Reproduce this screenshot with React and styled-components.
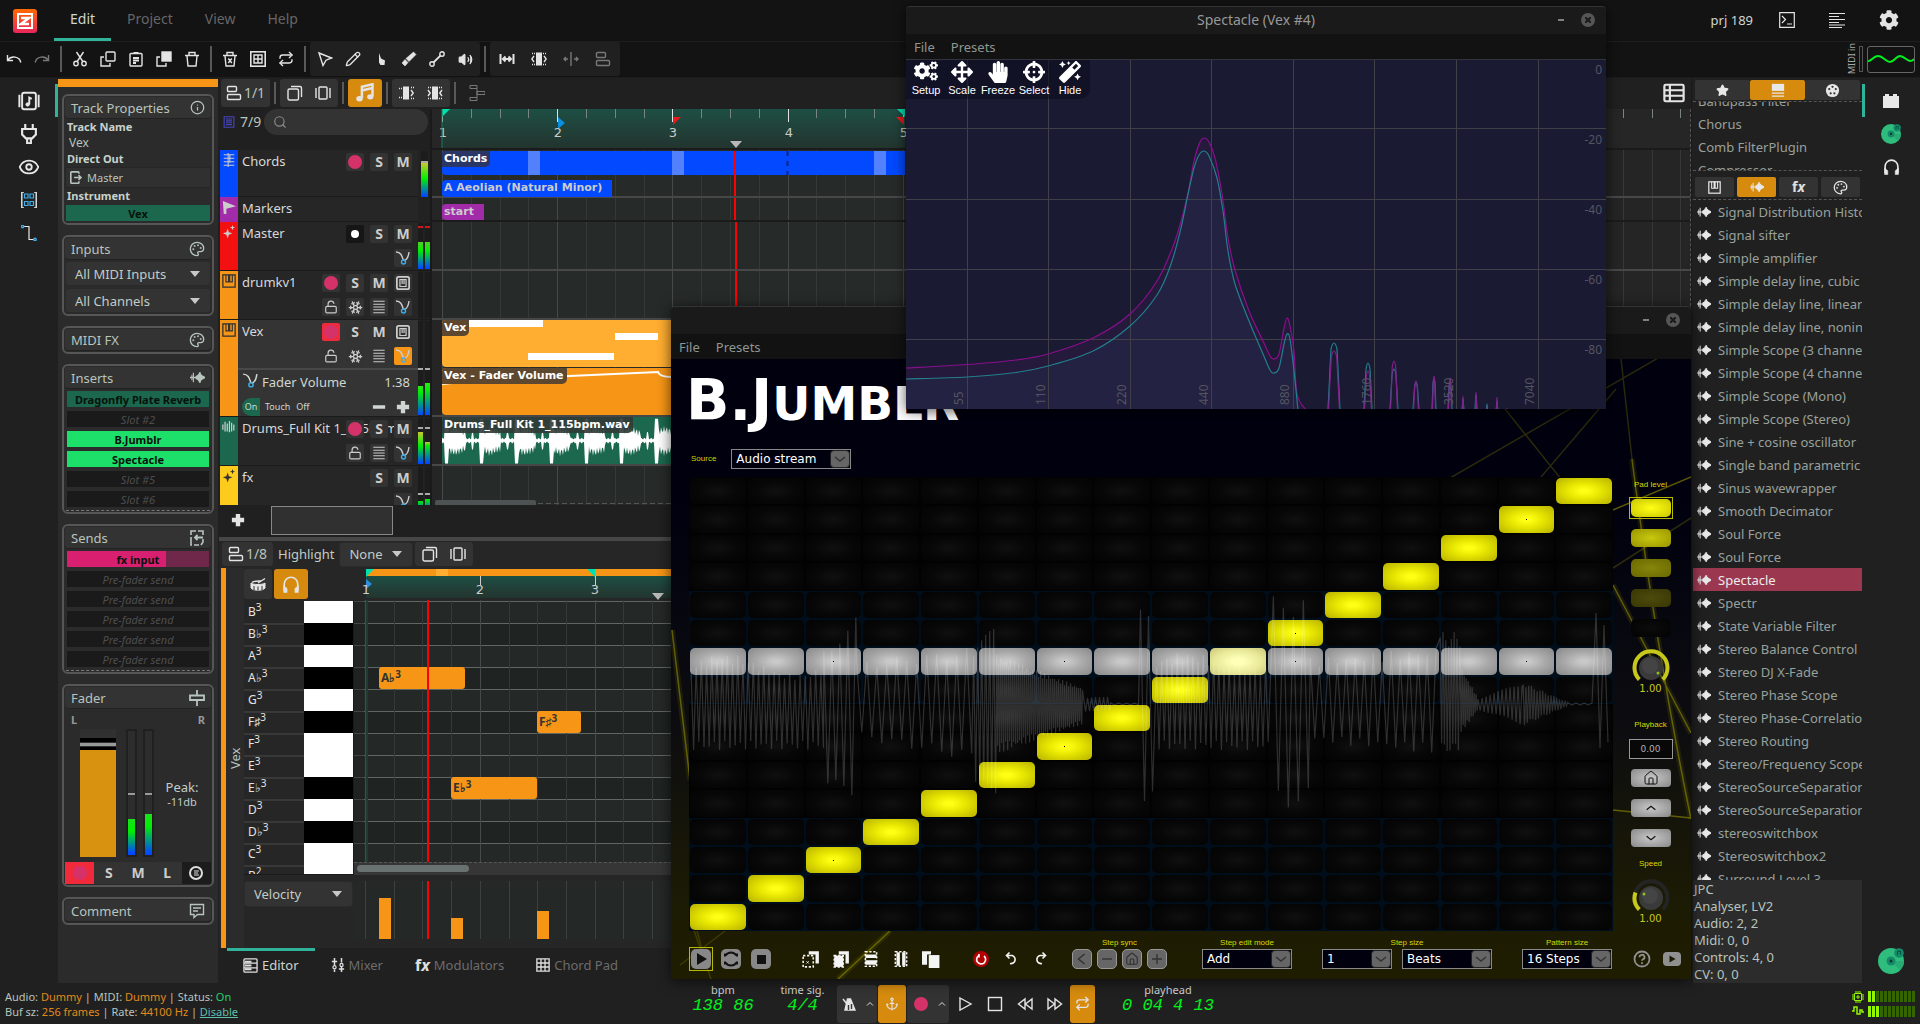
import React from "react";
import styled, { createGlobalStyle, css } from "styled-components";
import { Palette, Snowflake, Anchor, Repeat, Pencil, Info, Eye, Star, Search, House, LockOpen, Volume2 } from "lucide-react";
import { FaCogs, FaArrowsAlt, FaHandPaper, FaCrosshairs, FaMagic, FaCog } from "react-icons/fa";

const UI = `"Noto Sans", "Open Sans", sans-serif`;
const DV = `"DejaVu Sans", sans-serif`;
const ARIAL = `"Liberation Sans", Arial, sans-serif`;
const TEAL = "#2fb49b";
const ORANGE = "#d68b0e";
const CLIP = "#f79616";

const Global = createGlobalStyle`
  * { box-sizing: border-box; }
  body { margin: 0; background: #202020; color: #d5d5d5; font: 13px/20px ${UI}; overflow: hidden; }
  button, input, select { font: inherit; color: inherit; border: 0; padding: 0; margin: 0; background: none; border-radius: 0; }
  ul { list-style: none; margin: 0; padding: 0; }
  p, h1, h2 { margin: 0; font: inherit; }
  svg { display: block; flex: none; }
`;

/* ---------- icons ---------- */
const G = {
  undo: <><path d="M1.5 4v5.5h5.5" /><path d="M2 9C5 4.500 13.500 5 14.800 11.500" /></>,
  redo: <><path d="M14.500 4v5.500H9" /><path d="M14 9C11 4.500 2.500 5 1.200 11.500" /></>,
  cut: <><circle cx="4" cy="12.500" r="2.200" /><circle cx="12" cy="12.500" r="2.200" /><path d="M5.200 10.500 11.500 1M10.800 10.500 4.500 1" /></>,
  copy: <><rect x="6" y="1" width="9" height="9" rx="1" /><path d="M4 6H1v9h9v-3" /></>,
  paste: <><rect x="2" y="2.500" width="12" height="12.500" rx="1" /><path d="M5.500 2h5M5 7h6M5 9.500h6M5 12h3" strokeWidth="2" /></>,
  dup: <><rect x="6" y="1" width="9" height="9" fill="currentColor" /><path d="M4 6H1v9h9v-3" /></>,
  trash: <><path d="M1 4.500h14M3 5l1 10h8l1-10M5 4V1.500h6V4" /></>,
  clear: <><path d="M1 4.500h14M3 5l1 10h8l1-10M5 4V1.500h6V4M6.300 7.500l3.500 4.500M9.800 7.500 6.300 12" /></>,
  grid: <><rect x=".8" y=".8" width="14.400" height="14.400" strokeWidth="1.600" /><path d="M4 4h8v8H4zM8 4v8M4 8h8" /></>,
  pointer: <path d="M2 2l12.500 5-5.500 2.200L6 14.500z" />,
  hand: <path d="M6 2v9.500l1.500 2.500h4l.5-4.500-4-2z" fill="currentColor" stroke="none" />,
  eraser: <path d="M12.500 1l2.500 2.500-7 7L5 7.500zM4 8.500l3 3L4 15 1 12z" fill="currentColor" strokeWidth=".6" />,
  line: <><circle cx="13" cy="3" r="2.200" /><circle cx="3" cy="13" r="2.200" /><path d="M4.600 11.400l6.800-6.800" strokeWidth="2" /></>,
  fit: <path d="M1.500 3v10M14.500 3v10M4 8h8M6.500 5.500 4 8l2.500 2.500M9.500 5.500 12 8l-2.500 2.500" strokeWidth="2" />,
  stretch: <><path d="M5 1.500h6v13H5z" fill="currentColor" stroke="none" /><path d="M3 5 .8 8 3 11M13 5l2.200 3L13 11" /><path d="M1 2.500h3M12 2.500h3M1 13.500h3M12 13.500h3" strokeDasharray="1 1" /></>,
  stretchR: <><path d="M4 1.500h6v13H4z" fill="currentColor" stroke="none" /><path d="M12 5l2.200 3L12 11" /><path d="M0 3.500h3M0 12.500h3M12 2.500h3M12 13.500h3" strokeDasharray="1 1" /></>,
  shrink: <><path d="M5 1.500h6v13H5z" fill="currentColor" stroke="none" /><path d="M1 5l2.200 3L1 11M15 5l-2.200 3 2.200 3" /><path d="M1 2.500h3M12 2.500h3M1 13.500h3M12 13.500h3" strokeDasharray="1 1" /></>,
  split: <path d="M8 1v14M5 8H1M3 6 1 8l2 2M11 8h4M13 6l2 2-2 2" />,
  bars: <><rect x="1.500" y="1.500" width="9" height="5" rx="1" /><rect x="1.500" y="9.500" width="13" height="5" rx="1" /></>,
  layers: <><rect x="1" y="4" width="10.500" height="11" rx="1.500" /><path d="M4 1.500h9a1.500 1.500 0 0 1 1.500 1.500v9" /></>,
  brackets: <><rect x="4" y="2" width="8" height="12" rx="1" /><path d="M1 3v10M15 3v10" /></>,
  merge: <><path d="M1 .5h7v3H1zM1 12.500h7v3H1zM8 6.500h8v3H8z" strokeWidth="1" /><path d="M8 3.500v9" strokeWidth="1" /></>,
  note: <><path d="M5.500 12V3l8.500-2v9.500M5.500 6l8.500-2" strokeWidth="2" /><ellipse cx="3.600" cy="12.500" rx="2.600" ry="2.200" fill="currentColor" stroke="none" /><ellipse cx="12.200" cy="11" rx="2.500" ry="2.100" fill="currentColor" stroke="none" /></>,
  terminal: <path d="M.7.700h14.600v14.600H.7zM3 4l3.500 3.500L3 11M8 12h5" strokeWidth="1.200" />,
  lines: <path d="M0 1.500h16M0 4.500h10M0 7.500h16M0 10.500h10M0 13h16M0 15.500h13" strokeWidth="1.200" />,
  library: <><rect x="3" y="2" width="10" height="12" rx="1.500" /><path d="M1 3.500v9M15 3.500v9" /><circle cx="7" cy="10.500" r="1.300" fill="currentColor" strokeWidth=".5" /><path d="M8.200 10.500V5.500l1.800 1" /></>,
  plug: <path d="M5 0v4M11 0v4M2.500 4h11v4.500L10.500 11.500h-5L2.500 8.500zM6.500 12v3.500h3V12" strokeWidth="1.700" />,
  cells: <><path d="M3 0H.8v16H3M13 0h2.200v16H13" /><path d="M3.500 2h3.500v4H3.500zM9 2h3.500v4H9zM3.500 9.500h3.500v4H3.500zM9 9.500h3.500v4H9z" stroke="#3daee9" strokeWidth="1.200" /></>,
  step: <><path d="M2 1.500h6v13h5" strokeWidth="1.200" /><circle cx="1.500" cy="1.500" r="1.200" stroke="#3daee9" /><circle cx="14" cy="14.500" r="1.200" stroke="#3daee9" /></>,
  exit: <><path d="M11 3.500V2a1 1 0 0 0-1-1H2a1 1 0 0 0-1 1v12a1 1 0 0 0 1 1h8a1 1 0 0 0 1-1v-1.500" strokeWidth="2" /><path d="M5 8h8M10.500 5l3 3-3 3" strokeWidth="2" /></>,
  insert: <path d="M0 7.300h1.500V5h1v2.300H3V3h1.200v4.300H6V8.700H4.200V13H3V8.700h-.5V11h-1V8.700H0zM6 6.500 8.500 5V4h1V2.500h2V4l1.500 1.500 3 1.700v1.600l-3 1.700-1.500 1.500v1.500h-2V12h-1v-1L6 9.500z" fill="currentColor" stroke="none" />,
  send: <><path d="M14 5V1H2v14h8M14 9v3l-2 3" strokeWidth="1.600" strokeDasharray="9 2" /><path d="M14 7.500H6M8.500 5 6 7.500 8.500 10" strokeWidth="1.800" /></>,
  fader: <><path d="M8 0v5M8 11v5M1 5.500h14v4.500H1z" strokeWidth="1.800" /></>,
  comment: <path d="M1.500 1.500h13v10h-6L5 14.500v-3H1.500zM4 5h8M4 8h5" />,
  keys: <><rect x="1" y="1" width="14" height="14" strokeWidth="1.500" /><path d="M4.500 1v8h3V1M8.800 1v8h3V1" strokeWidth="1.300" /></>,
  keysBox: <><rect x="1" y="1" width="14" height="14" rx="2" strokeWidth="2" /><path d="M4.500 4v8h7V4zM7 4v5M9.200 4v5" /></>,
  strings: <><path d="M2 2h12M2 6h12M2 10h12M2 14h12" strokeWidth="1.200" /><path d="M7 0v16M9 2v9" strokeWidth="1.200" /></>,
  flag: <path d="M1 1l15 6-11 3v6H2z" fill="currentColor" stroke="none" />,
  spark: <path d="M6.500 4l1.300 4.200L12 9.500 7.800 11 6.500 15.500 5 11 1 9.500 5 8.200zM12 0l.8 2.200L15 3l-2.200.8L12 6l-.8-2.200L9 3l2.200-.8z" fill="currentColor" stroke="none" />,
  wave: <path d="M1 5v6M3.500 2v11M6 4v9M8.500 1v13M11 3v10M13.500 5v7" />,
  curve: <><path d="M1 2c5 0 6 4 7.500 8.500" /><path d="M9 10.500C12 10 13.500 6 14 2" /><circle cx="8.500" cy="12" r="2" stroke="#3daee9" /></>,
  lanes: <path d="M1.500 1.500h13M1.500 4.800h13M1.500 8h13M1.500 11.200h13M1.500 14.500h13" strokeWidth="1.200" />,
  plus: <path d="M8 1v14M1 8h14" strokeWidth="5" />,
  minus: <path d="M1 8h14" strokeWidth="4" />,
  page: <path d="M1.500 1h13v14h-13zM4 4h8M4 6.500h8M4 9h8M4 11.500h8" strokeWidth="1.500" />,
  drum: <><path d="M1 7c2 2 12 2 14 0v5c-2 3-12 3-14 0z" fill="currentColor" strokeWidth="1" /><path d="M2 6.500C4 4.500 9 5 11 5M8 7l7-4.500" /><path d="M4 10v4M8 10.500v4M12 10v4" stroke="#333" strokeWidth="1" /></>,
  phones: <><path d="M2 14V8a6 6 0 0 1 12 0v6" strokeWidth="1.500" /><path d="M1.500 9.500l3 2.500v3.500h-3zM14.500 9.500l-3 2.500v3.500h3z" fill="currentColor" strokeWidth=".5" /></>,
  roll: <><rect x="1" y="1" width="14" height="14" rx="1" /><path d="M1 5.500h14M1 10.500h14" /><path d="M2 4h7M2 8h7M2 12h7" strokeWidth="2" /></>,
  mixer: <><path d="M4 0v8M4 13v3M12 0v5M12 10v6M1 4h6M9 12.500h6" strokeWidth="1.700" /><circle cx="4" cy="10.500" r="1.800" /><circle cx="12" cy="8" r="1.800" /></>,
  chordpad: <path d="M1 1h14v14H1zM5.700 1v14M10.300 1v14M1 5.700h14M1 10.300h14" strokeWidth="1.500" />,
  metro: <><path d="M5.500 3h3l4.500 11H3z" fill="currentColor" /><path d="M1 3l8 10" /><path d="M6.500 14V9M9.500 13V8" stroke="#333" /></>,
  caret: <path d="M4 10l4-4 4 4" strokeWidth="1.300" />,
  play: <path d="M3 2l11 6-11 6z" />,
  stop: <rect x="1.500" y="1.500" width="13" height="13" />,
  rew: <path d="M8 3v10L1.500 8zM15 3v10L8.500 8z" />,
  ff: <path d="M8 3v10l6.500-5zM1 3v10l6.500-5z" />,
  table: <><rect x="1" y="2" width="14" height="12" rx="1" strokeWidth="1.600" /><path d="M5 2v12M1 6h14M1 10h14" strokeWidth="1.600" /></>,
  panel: <><path d="M1 1h14v8H1z" fill="currentColor" stroke="none" /><path d="M1 11.500h14M1 15h14" /></>,
  reel: <><circle cx="8" cy="8" r="7" fill="currentColor" stroke="none" /><g fill="#333" stroke="none"><circle cx="8" cy="4" r="1.200" /><circle cx="4.500" cy="6.500" r="1.200" /><circle cx="11.500" cy="6.500" r="1.200" /><circle cx="6" cy="11" r="1.200" /><circle cx="10" cy="11" r="1.200" /></g></>,
  lego: <path d="M0 3h2V1h4v2h4V1h4v2h2v12H0z" fill="currentColor" stroke="none" />,
  dashed: <><path d="M6 1h9v11h-3V4H6z" fill="currentColor" stroke="none" /><path d="M1 5h9v10H1z" strokeDasharray="2 1.500" /><path d="M4 10l2 2M6 10l-2 2" strokeWidth=".8" /></>,
  dashfill: <><path d="M6 1h9v11h-3V4H6z" fill="currentColor" stroke="none" /><path d="M2 5h8v10H2z" fill="currentColor" strokeDasharray="2 1.500" /></>,
  flipv: <><path d="M3 1.500h10v13H3z" strokeDasharray="2 1.500" /><path d="M3 4h10v3H3zM3 9h10v4H3z" fill="currentColor" stroke="none" /></>,
  fliph: <><path d="M3 1.500h10v13H3z" strokeDasharray="2 1.500" /><path d="M4 2h3v12H4zM9 2h3v12H9z" fill="currentColor" stroke="none" /></>,
  pages: <><path d="M0 1h8v3H4.500v9H0z" fill="currentColor" stroke="none" /><path d="M6 4.500h9.500V16H6z" fill="currentColor" stroke="none" /></>,
  ccw: <path d="M4 4.500h5a4 4 0 1 1-2 8M6.500 1.500l-3 3 3 3" strokeWidth="1.600" />,
  cw: <path d="M12 4.500H7a4 4 0 1 0 2 8M9.500 1.500l3 3-3 3" strokeWidth="1.600" />,
  left: <path d="M10.500 3l-6 5 6 5" strokeWidth="1.600" />,
  up: <path d="M3 10l5-4 5 4" strokeWidth="1.500" />,
  down: <path d="M3 6l5 4 5-4" strokeWidth="1.500" />,
  thinPlus: <path d="M8 3v10M3 8h10" />,
  thinMinus: <path d="M3 8h10" />,
  power: <><circle cx="8" cy="8" r="8" fill="#b30000" stroke="none" /><path d="M11 5a4.500 4.500 0 1 1-5-.5M6 3v3.500" strokeWidth="1.700" /></>,
};
const Glyph = ({ n, size = 16, color = "currentColor" }) => (
  <svg width={size} height={size} viewBox="0 0 16 16" fill="none" stroke={color} color={color} strokeWidth="1.4" aria-hidden="true">{G[n]}</svg>
);
const Disc = ({ size }) => (
  <svg width={size} height={size} viewBox="0 0 26 26" aria-hidden="true">
    <circle cx="13" cy="13" r="13" fill="#2fbd7d" /><path d="M13 13 22 22A13 13 0 0 0 26 13z" fill="#27ab72" />
    <circle cx="13" cy="13" r="4.500" fill="#158a68" /><circle cx="13" cy="13" r="1.500" fill="#0d3b31" />
    <circle cx="21" cy="5" r="4.800" fill="#138a6a" /><path d="M19.500 7V3.500l3-.5v3.500" stroke="#0b4a3b" fill="none" />
  </svg>
);

/* ---------- shared pieces ---------- */
const Shell = styled.div`display: flex; flex-direction: column; height: 100vh; position: relative; background: #202020;`;
const IconButton = styled.button`
  width: ${p => p.$w || 28}px; height: ${p => p.$h || 28}px; flex: none;
  display: flex; align-items: center; justify-content: center; gap: 2px;
  color: ${p => p.$dim ? "#787878" : "#e4e4e4"}; background: ${p => p.$bg || "none"}; border-radius: 3px;
`;
const Sep = styled.span`width: 2px; height: ${p => p.$h || 26}px; margin: 0 4px; background: #595959; flex: none;`;
const Cluster = styled.div`display: flex; align-items: center; height: ${p => p.$h || 34}px; padding: 0 1px; border-radius: 3px; background: ${p => p.$bg || "#202020"};`;
const Spacer = styled.span`flex: 1;`;

/* ---------- top ---------- */
const TopBar = styled.header`height: 42px; flex: none; display: flex; align-items: stretch; background: #131313; border-bottom: 1px solid #1e1e1e; padding: 0 19px 0 13px;`;
const Logo = styled.span`display: flex; align-items: center; width: 41px;`;
const MenuTab = styled.button`
  padding: 0 16px; font-size: 14px; color: ${p => p.$on ? "#ced4cf" : "#666"};
  border-bottom: 3px solid ${p => p.$on ? TEAL : "transparent"};
`;
const TopRight = styled.div`display: flex; align-items: center; gap: 24px; color: #d0d6d1; padding-bottom: 1px;`;
const Toolbar = styled.div`height: 36px; flex: none; display: flex; align-items: center; background: #131313; border-bottom: 1px solid #1c1c1c; padding: 0 5px 1px 0;`;
const MidiIn = styled.span`writing-mode: vertical-rl; transform: rotate(180deg); font-size: 9px; line-height: 12px; color: #a8a8a8;`;
const MidiLamp = styled.span`width: 4px; height: 26px; border: 1px solid #555; margin: 0 4px 0 1px;`;
const Scope = styled.div`width: 48px; height: 27px; border: 1px solid #666; border-radius: 3px; display: flex; align-items: center;`;

/* ---------- side rails ---------- */
const Main = styled.main`flex: 1; min-height: 0; display: flex; background: #202020;`;
const Rail = styled.nav`width: 58px; flex: none; display: flex; flex-direction: column; align-items: center; padding: 6px 0; background: #202020;`;
const RailButton = styled.button`
  width: 58px; height: 33px; display: flex; align-items: center; justify-content: center; color: #e8e8e8;
  border: 0 solid transparent; border-width: 0 3px;
  border-${p => p.$side || "right"}-color: ${p => p.$on ? TEAL : "transparent"};
`;

/* ---------- inspector ---------- */
const Inspector = styled.aside`width: 160px; flex: none; background: #2b2b2b; border-top: 1px solid #202020; display: flex; flex-direction: column; gap: 10px; padding: 0 4px; margin-right: 1px; overflow: hidden;`;
const InspectorColor = styled.div`height: 8px; margin: 0 -4px -3px; background: ${CLIP}; flex: none;`;
const Section = styled.section`border: 2px solid #565656; border-radius: 6px; padding: 1px; display: flex; flex-direction: column; flex: none;`;
const SectionHead = styled.h2`height: 22px; display: flex; align-items: center; justify-content: space-between; padding: 0 6px; background: #333; border-radius: 4px; color: #b8c4be; border-bottom: 1px solid #222;`;
const FieldTitle = styled.p`font-size: 11px; font-weight: bold; line-height: 16px; padding-left: 2px; color: #c8d2cc;`;
const FieldValue = styled.p`font-size: 12px; line-height: 16px; padding-left: 4px; color: #b8c4be;`;
const OutButton = styled.button`height: 21px; display: flex; align-items: center; gap: 4px; padding: 0 4px; background: #303030; border: 1px solid #262626; font-size: 11px; color: #b8c4be;`;
const Slot = styled.button`
  height: 16px; margin: 2px 2px; font-size: 11px; line-height: 15px; text-align: center;
  background: ${p => p.$bg || "#1a1a1a"};
  ${p => p.$bg ? css`color: #06120c; font-weight: bold;` : css`color: #4d4d4d; font-style: italic;`}
`;
const InstrumentSlot = styled(Slot)`margin: 1px;`;
const Dash = styled.div`border-bottom: 1px dashed #777; height: 2px; margin: 0 1px;`;
const PickWrap = styled.div`
  display: grid; align-items: center; height: ${p => p.$h || 25}px; margin-top: ${p => p.$mt || 0}px; width: ${p => p.$w ? p.$w + "px" : "auto"};
  background: #333; border-radius: 3px; border: 1px solid #2a2a2a;
  & > * { grid-area: 1 / 1; }
  select { appearance: none; height: 100%; padding-left: 9px; color: #c2ccc6; outline: 0; }
  svg { justify-self: end; margin-right: 10px; pointer-events: none; }
`;
const Pick = ({ id, label, options, ...r }) => (
  <PickWrap {...r}>
    <select id={id} aria-label={label}>{options.map(o => <option key={o}>{o}</option>)}</select>
    <svg width="10" height="6" viewBox="0 0 10 6"><path d="M0 0h10L5 6z" fill="#c8c8c8" /></svg>
  </PickWrap>
);
const PickTitle = styled.label`padding: 0 3px; color: #c2ccc6;`;
const Balance = styled.div`display: flex; justify-content: space-between; padding: 2px 6px 0; font: bold 11px/18px ${UI}; color: #999;`;
const FaderRow = styled.div`display: flex; height: 133px; padding: 0 0 0 15px; align-items: flex-start;`;
const FaderTrack = styled.div`width: 36px; height: 128px; background: linear-gradient(#303030 0 9px, #000 9px 13px, #303030 13px 14px, #999 14px 17px, #303030 17px 18px, #000 18px 21px, #d9920f 21px);`;
const BigMeter = styled.div`width: 11px; height: 128px; border: 2px solid #202020; margin-left: ${p => p.$ml}px; background: linear-gradient(#2d2d2d 0 62px, #999 62px 64px, #2d2d2d 64px ${p => p.$t}px, #1ce01c ${p => p.$t}px, #00f000 ${p => p.$t + 12}px, #0048ff 122px);`;
const Peak = styled.p`width: 40px; margin: 50px 0 0 8px; text-align: center; line-height: 16px; color: #c2ccc6; small { font-size: 11px; display: block; line-height: 14px; }`;
const ChannelKeys = styled.div`display: flex; height: 22px; background: #333;`;
const ChannelKey = styled.button`flex: 1; display: flex; align-items: center; justify-content: center; font-weight: bold; font-size: 14px; color: #ccc; background: ${p => p.$bg || "none"};`;
const Knoblet = styled.span`width: ${p => p.$s || 14}px; height: ${p => p.$s || 14}px; border-radius: 50%; background: ${p => p.$c || "#d53269"};`;

/* ---------- arranger ---------- */
const Center = styled.div`flex: 1; min-width: 0; display: flex; flex-direction: column; background: #202020;`;
const ArrangerBar = styled.div`height: 31px; flex: none; display: flex; align-items: center; padding: 0 5px 2px 2px;`;
const SnapLabel = styled.span`font-size: 14px; color: #b8c4be;`;
const Arranger = styled.div`height: 396px; flex: none; display: flex; overflow: hidden;`;
const TrackList = styled.div`width: 213px; flex: none; padding-left: 1px; border-right: 2px solid #1a1a1a; background: #202020;`;
const TrackFilter = styled.div`height: 41px; display: flex; align-items: flex-start; gap: 6px; padding: 0 2px 0 3px; color: #b8c4be; font-size: 14px;`;
const SearchBox = styled.label`height: 26px; width: 166px; border-radius: 13px; background: #333; display: flex; align-items: center; padding-left: 9px; color: #8a8a8a; input { width: 120px; outline: 0; }`;
const FilterCount = styled.span`display: flex; align-items: center; gap: 5px; height: 26px; width: 35px;`;
const Track = styled.div`display: grid; grid-template-columns: 18px 1fr 12px; height: ${p => p.$h}px; border-bottom: 1px solid #1b1b1b; background: ${p => p.$sel ? "#343434" : "#262626"};`;
const TrackColor = styled.div`background: ${p => p.$c}; display: flex; justify-content: center; padding-top: 3px; overflow: hidden;`;
const TrackBody = styled.div`display: grid; min-width: 0; grid-template-rows: 48px auto; grid-template-columns: 100%; & > * { grid-column: 1; }`;
const TrackName = styled.span`grid-row: 1; padding: 1px 0 0 4px; white-space: nowrap; overflow: hidden; text-overflow: ellipsis; color: #d8d8d8;`;
const TrackKeys = styled.div`grid-row: 1; display: grid; grid-template-columns: repeat(4, 18px); grid-auto-rows: 18px; gap: 6px; justify-content: start; padding: 3px 6px 0 0; direction: rtl;`;
const TrackKey = styled.button`direction: ltr; display: flex; align-items: center; justify-content: center; border-radius: 2px; background: ${p => p.$bg || "#333"}; color: #ccc; font: bold 14px/18px ${UI};`;
const AutoRow = styled.div`border-top: 2px solid #484848; display: grid; grid-template-columns: auto 1fr auto; padding: 2px 8px 0 4px; font-size: 13px; line-height: 21px; color: #d0d6d1; align-content: start; justify-items: start; gap: 1px 3px;`;
const AutoValue = styled.span`justify-self: end;`;
const AutoModes = styled.div`grid-column: 1 / 3; display: flex; gap: 4px; font-size: 9px; line-height: 18px; margin-top: 4px; & > button { padding: 0 1px; }`;
const OnMode = styled.button`width: 18px; height: 18px; background: #1b684e; border-radius: 9px 0 0 9px;`;
const AutoSteps = styled.div`display: flex; gap: 10px; align-items: center; height: 18px; margin-top: 4px;`;
const Meters = styled.div`display: flex; gap: 2px; justify-content: center; background: #222; padding: 1px 0;`;
const Meter = styled.span`width: ${p => p.$w || 5}px; background: linear-gradient(#1c1c1c 0 ${p => p.$p}px, ${p => p.$pc || "#aaa"} ${p => p.$p}px ${p => p.$p + 2}px, #1c1c1c ${p => p.$p + 2}px ${p => p.$t}px, ${p => p.$hot ? "#c8c832" : "#50d020"} ${p => p.$t}px, #00f000 60%, #0048ff 98%);`;
const IdleMeter = styled.span`width: 5px; background: linear-gradient(#1c1c1c 46px, #999 46px);`;
const AutoMeter = styled.span`width: 5px; background: linear-gradient(#1c1c1c 0 47px, #aaa 47px 49px, #1c1c1c 49px ${p => p.$t}px, #30e818 ${p => p.$t}px, #00f000 ${p => p.$t + 6}px, #0048ff 94px);`;

const Timeline = styled.div`flex: 1; min-width: 0; position: relative; background: #252525; overflow: hidden; border-right: 1px dashed #555;`;
const Ruler = styled.div`height: ${p => p.$h}px; position: relative; border-bottom: 2px solid #1b1b1b; background: #262626;`;
const Lanes = styled.div`position: relative; background: linear-gradient(90deg, #252525 10px, #262a29 10px 473px, #252525 473px);`;
const GridLines = styled.svg`position: absolute; left: 0; top: 0; width: 100%; height: 100%;`;
const Lane = styled.div`height: ${p => p.$h}px; position: relative; border-bottom: ${p => p.$dark ? "2px solid #1b1b1b" : "2px solid #474747"};`;
const Clip = styled.div`position: absolute; left: 10px; top: ${p => p.$t}px; width: ${p => p.$w}px; height: ${p => p.$h}px; background: ${p => p.$c}; border-radius: 4px 0 0 4px; overflow: hidden; svg { position: absolute; left: 0; top: 0; }`;
const ClipLabel = styled.span`position: relative; display: inline-block; height: 16px; padding: 0 3px 0 2px; border-radius: 3px 0 5px 0; background: ${p => p.$bg || "transparent"}; font: bold 11px/16px ${DV}; color: ${p => p.$bg ? "#fff" : "#ccc"}; white-space: nowrap; vertical-align: top;`;
const Playline = styled.span`position: absolute; left: ${p => p.$x}px; top: ${p => p.$t || 0}px; bottom: 0; width: 2px; background: #f00;`;
const LaneScroll = styled.svg`position: relative; margin-top: 34px;`;
const AddRow = styled.div`height: 32px; flex: none; display: flex; align-items: flex-start; padding: 1px 0 0 11px;`;
const MiniView = styled.div`width: 122px; height: 29px; margin-left: 25px; background: #303030; border: 1px solid #888;`;
const Divider = styled.div`height: 4px; flex: none; background: #474747;`;

/* ---------- editor ---------- */
const EditorBar = styled.div`height: 27px; flex: none; display: flex; align-items: center; gap: 2px; background: #262626; padding: 0 0 1px 3px;`;
const Editor = styled.div`flex: 1; min-height: 0; display: grid; grid-template-columns: 5px 18px 110px 1fr; grid-template-rows: 32px 275px 1fr; padding-left: 2px; background: #262626;`;
const Strip = styled.div`grid-row: 1 / 4; background: ${CLIP};`;
const EditorName = styled.div`grid-row: 1 / 4; writing-mode: vertical-rl; transform: rotate(180deg); text-align: center; line-height: 18px; color: #b8c4be; background: #2b2b2b;`;
const EditorKeys = styled.div`display: flex; gap: 2px; padding: 1px 0 0; background: #262626;`;
const Piano = styled.div`overflow: hidden; border-right: 1px solid #1a1a1a; border-bottom: 1px solid #1a1a1a; padding-top: 1px;`;
const PianoKey = styled.div`
  display: grid; grid-template-columns: 60px 49px; height: 22px; line-height: 22px; font-size: 12px; color: #e4e4e4;
  span { padding-left: 4px; border-bottom: 2px solid #383838; }
  i { background: ${p => p.$black ? "#000" : "#fff"}; border-bottom: 1px solid ${p => p.$black ? "#3a3a3a" : "#eee"}; }
  sup { font-size: 10px; line-height: 0; vertical-align: 5px; }
`;
const NoteArea = styled.div`position: relative; overflow: hidden; background: #242827; min-width: 0;`;
const Note = styled.span`position: absolute; left: ${p => p.$x}px; top: ${p => p.$y}px; width: ${p => p.$w}px; height: 22px; padding-left: 2px; border-radius: 3px; background: ${CLIP}; color: #333; font: bold 12px/22px ${UI}; sup { font-size: 10px; line-height: 0; vertical-align: 4px; }`;
const HScroll = styled.div`position: absolute; left: 0; right: 0; bottom: 0; height: 13px; background: #363636; border-top: 1px dashed #555; &::before { content: ""; position: absolute; left: 3px; top: 2px; width: 112px; height: 7px; border-radius: 4px; background: #697271; }`;
const VelCell = styled.div`padding-top: 6px;`;
const VelBar = styled.span`position: absolute; left: ${p => p.$x}px; bottom: 0; width: 12px; height: ${p => p.$h}px; background: ${CLIP};`;
const VelArea = styled(NoteArea)`height: 58px; margin-top: 6px;`;
const BottomTabs = styled.div`height: 35px; flex: none; display: flex; padding-left: 8px;`;
const BottomTab = styled.button`display: flex; align-items: center; gap: 4px; padding: 0 16px 4px; border-top: 3px solid ${p => p.$on ? TEAL : "transparent"}; color: ${p => p.$on ? "#ced4cf" : "#6c6c6c"}; svg { color: #e0e0e0; }`;
const Fx = styled.b`font: bold ${p => p.$s}px/16px ${UI}; color: #e0e0e0;`;

/* ---------- browser ---------- */
const Browser = styled.aside`width: 171px; flex: none; display: flex; flex-direction: column; padding: 2px 0 0 1px; background: #202020; border-left: 1px solid #1a1a1a;`;
const TabRow = styled.div`display: flex; gap: ${p => p.$g || 0}px; padding: 0 2px; height: 20px; flex: none;`;
const BrowserTab = styled.button`flex: 1; height: 20px; display: flex; align-items: center; justify-content: center; border-radius: 2px; background: ${p => p.$on ? ORANGE : "#333"}; color: #e8e8e8;`;
const ShortList = styled.ul`height: 70px; flex: none; margin-top: 1px; border-top: 1px dashed #555; border-bottom: 1px dashed #555; overflow: hidden; display: flex; flex-direction: column; justify-content: center; margin-bottom: 6px;`;
const ShortRow = styled.li`height: 23px; line-height: 23px; flex: none; padding-left: 5px; color: #98a09c;`;
const LongList = styled.ul`flex: 1; min-height: 0; margin-top: 2px; overflow: hidden; border-top: 1px dashed #555;`;
const PluginRow = styled.button`display: flex; align-items: center; gap: 7px; height: 23px; width: 100%; padding-left: 4px; white-space: nowrap; overflow: hidden; color: ${p => p.$on ? "#ececec" : "#98a09c"}; background: ${p => p.$on ? "#9b3850" : "none"}; svg { color: #e8e8e8; }`;
const PluginInfo = styled.div`height: 103px; flex: none; background: #2c2c2c; line-height: 17px; color: #b8c4be; padding: 1px 0 0 1px; white-space: pre-line;`;

/* ---------- footer ---------- */
const Footer = styled.footer`height: 41px; flex: none; display: flex; align-items: center; background: #202020; padding: 0 5px;`;
const Status = styled.div`width: 673px; font-size: 11px; line-height: 15px; color: #b8c4be; em { font-style: normal; color: #e08a1c; } i { font-style: normal; color: #1fd368; } a { color: #5fbfae; }`;
const Lcd = styled.div`width: ${p => p.$w}px; display: flex; flex-direction: column; align-items: center; font-size: 11px; line-height: 14px; color: #d0d0d0; padding-bottom: 10px; output { font: italic 17px/18px "Liberation Mono", monospace; color: #00f01e; white-space: pre; }`;
const TransportGroup = styled.div`display: flex; height: 38px; border-radius: 3px; background: ${p => p.$on ? ORANGE : "#333"}; margin-right: 1px;`;
const CpuGrid = styled.div`display: grid; grid-template-columns: 12px auto; gap: 3px 4px; align-items: center;`;
const CpuBars = styled.div`display: flex; gap: 1px; height: 11px; i { width: 3px; background: #356400; } i:nth-child(-n + ${p => p.$n}) { background: #94f500; }`;

/* ---------- floating windows ---------- */
const Win = styled.section`position: absolute; left: ${p => p.$x}px; top: ${p => p.$y}px; width: ${p => p.$w}px; background: #1a1a1a; border-radius: 4px 4px 0 0; box-shadow: 0 2px 14px rgba(0,0,0,.65); border-top: 1px solid #333;`;
const WinTitle = styled.div`height: 27px; display: grid; grid-template-columns: 60px 1fr 60px; align-items: center; font-size: 14px; color: #989898; padding-bottom: 1px; h1 { text-align: center; }`;
const WinKeys = styled.div`display: flex; gap: 17px; align-items: center; padding-left: 12px;`;
const WinMin = styled.button`width: 6px; height: 2px; background: #808080;`;
const WinClose = styled.button`width: 14px; height: 14px; border-radius: 50%; background: #555; color: #1a1a1a; display: flex; align-items: center; justify-content: center;`;
const WinMenu = styled.div`height: 25px; display: flex; gap: 16px; padding-left: 8px; background: #121212; color: #8f9692;`;
const Window = ({ title, children, ...r }) => (
  <Win {...r}>
    <WinTitle><span /><h1>{title}</h1><WinKeys><WinMin aria-label="Minimize" /><WinClose aria-label="Close"><svg width="6" height="6"><path d="M0 0l6 6M6 0L0 6" stroke="#1a1a1a" strokeWidth="2" /></svg></WinClose></WinKeys></WinTitle>
    <WinMenu><button>File</button><button>Presets</button></WinMenu>
    {children}
  </Win>
);
const SpectrumBody = styled.div`position: relative; height: 350px; background: #1a1a33; border-top: 1px solid #333340; overflow: hidden;`;
const SpectrumTools = styled.div`position: absolute; left: 0; top: 0; display: flex; width: 184px; padding-left: 2px; height: 39px; background: rgba(14,14,32,.6); border-radius: 0 0 10px 0;`;
const SpectrumTool = styled.button`width: 36px; height: 37px; display: flex; flex-direction: column; align-items: center; justify-content: flex-end; color: #fff; font: 11px/14px ${ARIAL};`;

const smooth = pts => {
  let d = `M${pts[0][0]} ${pts[0][1]}`;
  for (let i = 0; i < pts.length - 1; i++) {
    const a = pts[i - 1] || pts[i], b = pts[i], c = pts[i + 1], e = pts[i + 2] || c;
    d += `C${b[0] + (c[0] - a[0]) / 6} ${b[1] + (c[1] - a[1]) / 6} ${c[0] - (e[0] - b[0]) / 6} ${c[1] - (e[1] - b[1]) / 6} ${c[0]} ${c[1]}`;
  }
  return d;
};
const magenta = smooth([[0,308],[61,304.5],[110,300],[142,294],[187,278],[224,254],[251,221],[269,181],[281,138],[288,101],[294,82],[298,78],[303,82],[309,98],[316,134],[322,178],[329,210],[343,251],[357,281],[364,296],[368,299],[373,294],[378,268],[381,258],[384,266],[388,291],[391,334],[400,350]]);
const cyan = smooth([[0,319],[61,317],[110,312.5],[142,306],[187,291],[224,266],[251,235],[265,204],[275,168],[282,134],[288,108],[293,95],[298,91],[303,96],[311,118],[317,151],[322,191],[329,224],[343,261],[357,294],[364,310],[368,313],[373,308],[378,284],[381,274],[384,279],[388,311],[392,350]]);
const harmonics = [[428,283,291,6],[462,303,311,4],[488,309,301,4],[510,322,321,3],[528,318,316,2],[544,322,318,2],[557,339,336,1],[570,335,332,1],[581,344,347,1],[591,341,337,1],[601,350,348,1]];
const peak = (x, y, w) => `M${x - w} 350L${x - w / 2} ${y + 6}Q${x} ${y - 6} ${x + w / 2} ${y + 6}L${x + w} 350`;

const Spectrum = () => (
  <svg width="100%" height="350" viewBox="0 0 700 350" preserveAspectRatio="none" fontFamily="Noto Sans, sans-serif" fontSize="12" fill="#55555f">
    <path d={magenta + "L0 350z"} fill="#25193c" /><path d={cyan + "L0 350z"} fill="#232242" />
    <path d="M61.500 0V350M142.500 0V350M224.500 0V350M305.500 0V350M387.500 0V350M468.500 0V350M550.500 0V350M632.500 0V350M0 68.500H700M0 139.500H700M0 209.500H700M0 279.500H700" stroke="#3f4048" fill="none" />
    <g fill="none" strokeWidth="1.200">
      <path d={magenta} stroke="#8a0f8c" /><path d={cyan} stroke="#227f8c" />
      {harmonics.map(([x, c, m, w]) => <g key={x}><path d={peak(x, c, w)} stroke="#227f8c" /><path d={peak(x, m, w - .5)} stroke="#84208c" /></g>)}
    </g>
    {[0, -20, -40, -60, -80].map((v, i) => <text key={v} x="696" y={14 + i * 70} textAnchor="end">{v}</text>)}
    {[55, 110, 220, 440, 880, 1760, 3520, 7040].map((v, i) => <text key={v} transform={`translate(${[57, 139, 220, 302, 383, 465, 547, 628][i]} 345) rotate(-90)`}>{v}</text>)}
  </svg>
);

/* ---------- B.Jumblr ---------- */
const JBody = styled.div`position: relative; height: 620px; display: grid; grid-template-columns: 18px 1fr 78px; grid-template-rows: 118px 454px 48px; background: linear-gradient(180deg, #00000f 0 22%, #0d0d10 60%, #1c1b04 88%, #1f1d00); & > * { position: relative; }`;
const JLines = styled.svg`&& { position: absolute; left: 0; top: 0; }`;
const JHead = styled.div`grid-column: 2; display: flex; flex-direction: column; padding: 9px 0 0 0;`;
const JLogo = styled.h1`font: bold 57px/64px ${DV}; color: #fff; height: 64px; margin-left: -3px; small { font-size: 47px; }`;
const JSource = styled.label`display: flex; align-items: center; gap: 15px; margin: 17px 0 0 2px; font: 8px/10px ${ARIAL}; color: #d0d000;`;
const JSelWrap = styled.span`display: inline-grid; grid-template-columns: 1fr 20px; width: ${p => p.$w}px; height: 20px; border: 1px solid #888; background: #00000f; select { appearance: none; color: #fff; font: 12px/18px ${DV}; padding-left: 4px; outline: 0; }`;
const JChev = styled.span`background: #666; border: 1px solid #222; border-radius: 4px; color: #333; display: flex; align-items: center; justify-content: center; pointer-events: none;`;
const JSelect = ({ value, w, label }) => <JSelWrap $w={w}><select aria-label={label} defaultValue={value}><option>{value}</option></select><JChev><Glyph n="down" size={16} /></JChev></JSelWrap>;
const PadsWrap = styled.div`grid-column: 2; display: grid;`;
const Pads = styled.div`display: grid; grid-template: repeat(16, 1fr) / repeat(16, 1fr); gap: 2px; padding: 1px; background: linear-gradient(#020202 0 25%, #000e1c 25% 50%, #020202 50% 75%, #000e1c 75%);`;
const tones = {
  off: "radial-gradient(ellipse, #101010, #070707 50%, #030303)",
  grey: "radial-gradient(ellipse, #c8c8c8 10%, #a8a8a8 50%, #888)",
  on: "radial-gradient(ellipse, #ffff14 10%, #e4e400 45%, #b8b000)",
  mix: "radial-gradient(ellipse, #ffffb8 15%, #e8e898 60%, #c8c478)",
};
const Pad = styled.button`border-radius: 5px; background: ${p => tones[p.$t]}; display: flex; align-items: center; justify-content: center; i { width: 1px; height: 1px; background: #000; }`;
const WaveOver = styled.svg`position: absolute; left: 0; top: 0; width: 100%; height: 100%; pointer-events: none;`;
const JSide = styled.div`grid-column: 3; grid-row: 2 / 3; display: flex; flex-direction: column; align-items: center; font: 8px/14px ${ARIAL}; color: #d8d800; padding: 1px 3px 0 0;`;
const Level = styled.button`width: 40px; height: 18px; border-radius: 5px; margin-top: 12px; background: radial-gradient(ellipse, ${p => p.$a}, ${p => p.$b});`;
const LevelFrame = styled.div`border: 1px solid #b8b800; padding: 1px; margin: 5px 0 -2px; display: flex; ${Level} { margin: 0; }`;
const KnobValue = styled.span`font: 10px/12px ${DV}; margin-top: -3px; color: #c8c820;`;
const JLabel = styled.span`margin-top: ${p => p.$mt}px;`;
const PosBox = styled.input`&& { width: 44px; height: 20px; border: 1px solid #999; margin-top: 7px; background: #080808; text-align: center; font: 9px/18px ${DV}; color: #b0b0b0; }`;
const JKey = styled.button`width: 40px; height: 18px; margin-top: ${p => p.$mt || 12}px; border-radius: 4px; background: radial-gradient(ellipse, #c8c8c8, #888); color: #111; display: flex; align-items: center; justify-content: center;`;
const JFoot = styled.div`grid-column: 2 / 4; display: flex; align-items: flex-end; padding-bottom: 10px;`;
const JGroup = styled.div`display: flex; flex-direction: column; align-items: center; margin-left: ${p => p.$ml || 0}px; font: 8px/13px ${ARIAL}; color: #d8d800;`;
const JRow = styled.div`display: flex; align-items: center; gap: ${p => p.$g || 10}px; height: 20px; padding-left: ${p => p.$pl || 0}px;`;
const JSq = styled.button`width: 20px; height: 20px; border-radius: 5px; background: ${p => p.$dim ? "#666" : "#888"}; color: ${p => p.$dim ? "#333" : "#111"}; border: ${p => p.$dim ? "1px solid #999" : 0}; display: flex; align-items: center; justify-content: center;`;
const JFrame = styled.span`border: 1px solid #b8b800; padding: 1px; margin: -2px;`;
const JPlain = styled.button`width: 20px; height: 20px; display: flex; align-items: center; justify-content: center; color: #f4f4f4;`;

const Knob = ({ full }) => (
  <svg width="42" height="38" viewBox="0 0 42 38" fill="none" aria-hidden="true">
    <path d="M9.300 31.500A16.500 16.500 0 1 1 32.700 31.500" stroke="#242424" strokeWidth="4" />
    <path d={full ? "M9.300 31.500A16.500 16.500 0 1 1 32.700 31.500" : "M9.300 31.500A16.500 16.500 0 0 1 5.500 14.500"} stroke="#c8c81a" strokeWidth="4" />
    <circle cx="21" cy="20" r="12" fill="#3a3a3a" /><circle cx="20" cy="18" r="8" fill="#444" />
    <circle cx={full ? 28 : 14} cy={full ? 25 : 16} r="1.500" fill="#90c020" />
  </svg>
);
const jumblrWave = (() => {
  const mid = 227, pts = [];
  const seg = (a, b, step, up, dn) => { for (let x = a, i = 0; x < b; x += step, i++) { const k = (x - a) / (b - a), j = .9 + .1 * Math.sin(x * 1.7); pts.push([x, i % 2 ? mid + dn(k) * j : mid - up(k) * j]); } };
  const c = v => () => v;
  seg(2, 135, 2.6, k => 40 + 10 * Math.sin(k * 6), c(46));
  seg(135, 168, 4, k => 60 + 28 * k, c(95));
  seg(168, 285, 5, k => 42 + 15 * k, k => 34 + 24 * k);
  seg(285, 308, 2, k => 50 + 40 * k, c(95));
  seg(308, 395, 1, k => 50 - 34 * k, k => 50 - 30 * k);
  seg(395, 422, 2, c(7), c(8));
  seg(422, 452, 4, c(1), c(1));
  seg(452, 468, 4, c(95), c(100));
  seg(468, 585, 2.600, k => 44 + 8 * Math.sin(k * 6), c(46));
  seg(585, 622, 5, c(108), c(105));
  seg(622, 752, 4.500, k => 46 + 12 * k, k => 38 + 12 * k);
  seg(752, 772, 1.400, c(72), c(48));
  seg(772, 790, 1, k => 40 - 34 * k, k => 30 - 24 * k);
  seg(790, 835, 2, k => 6 + 16 * k, k => 6 + 16 * k);
  seg(835, 880, 1.400, k => 22 - 20 * k, k => 22 - 20 * k);
  seg(880, 908, 4, c(1), c(1));
  seg(908, 924, 4, k => 112 - 30 * k, k => 60 - 20 * k);
  return "M" + pts.map(p => p.map(v => v.toFixed(1)).join(" ")).join("L");
})();

const Jumblr = () => (
  <JBody>
    <JLines width="1020" height="620" viewBox="0 0 1020 620" fill="none" stroke="#8a8400" strokeWidth="1.500">
      <g opacity=".14" strokeWidth="6"><path d="M961 100Q985 290 1020 460M942 226 1020 374M1 271 19 421M219 572 167 620" /></g>
      <g opacity=".65"><path d="M961 100Q985 290 1020 460M942 226 1020 374M942 151 1020 118M1 271 19 421M219 572 167 620M942 451 1020 459" /></g>
      <g opacity=".3"><path d="M961 100 950 0M942 209 1020 159M760 130 1020 -20M810 20 890 120M870 118 945 30M26 572 34 601M54 572 9 606M19 560 40 620" /></g>
    </JLines>
    <JHead>
      <JLogo>B.J<small>UMBLR</small></JLogo>
      <JSource>Source <JSelect w={120} value="Audio stream" label="Source" /></JSource>
    </JHead>
    <PadsWrap>
      <Pads>
        {Array.from({ length: 256 }, (_, i) => {
          const r = Math.floor(i / 16), c = i % 16, on = c === 15 - r;
          const t = r === 6 ? (on ? "mix" : "grey") : on ? "on" : "off";
          return <Pad key={i} $t={t} aria-label={`Pad ${r + 1}, ${c + 1}`}>{t !== "off" && c % 4 === 2 && <i />}</Pad>;
        })}
      </Pads>
      <WaveOver viewBox="0 0 925 454" preserveAspectRatio="none"><path d={jumblrWave} fill="none" stroke="#fff" strokeOpacity=".17" strokeWidth="1.200" /></WaveOver>
    </PadsWrap>
    <JSide>
      <span>Pad level</span>
      <LevelFrame><Level $a="#ffff14" $b="#c8c400" aria-label="Level 5" /></LevelFrame>
      <Level $a="#c8c80e" $b="#989400" aria-label="Level 4" />
      <Level $a="#86860c" $b="#6a6800" aria-label="Level 3" />
      <Level $a="#4c4a0c" $b="#3a3804" aria-label="Level 2" />
      <Level $a="#0c0c0c" $b="#020202" aria-label="Level 1" />
      <JLabel $mt={11}><Knob full /></JLabel><KnobValue>1.00</KnobValue>
      <JLabel $mt={23}>Playback</JLabel>
      <PosBox aria-label="Playback" defaultValue="0.00" />
      <JKey $mt={10} aria-label="Home"><House size={16} strokeWidth={1.500} /></JKey>
      <JKey aria-label="Up"><Glyph n="up" size={14} /></JKey>
      <JKey aria-label="Down"><Glyph n="down" size={14} /></JKey>
      <JLabel $mt={10}>Speed</JLabel>
      <JLabel $mt={7}><Knob /></JLabel><KnobValue>1.00</KnobValue>
    </JSide>
    <JFoot>
      <JRow $pl={2}>
        <JFrame><JSq aria-label="Play"><svg width="12" height="12"><path d="M2 0l10 6-10 6z" fill="#111" /></svg></JSq></JFrame>
        <JSq aria-label="Bypass"><svg width="16" height="16" fill="none" stroke="#111" strokeWidth="2"><path d="M2.500 4.500A6.500 6.500 0 0 1 13.500 4.500M2.500 11.500A6.500 6.500 0 0 0 13.500 11.500M2 2.500v3M14 2.500v3M2 10.500v3M14 10.500v3" /></svg></JSq>
        <JSq aria-label="Stop"><svg width="9" height="9"><path d="M0 0h9v9H0z" fill="#111" /></svg></JSq>
      </JRow>
      <JGroup $ml={30}><JRow>{["dashed", "dashfill", "flipv", "fliph", "pages"].map(n => <JPlain key={n} aria-label={n}><Glyph n={n} size={18} /></JPlain>)}</JRow></JGroup>
      <JGroup $ml={30}><JRow>{["power", "ccw", "cw"].map(n => <JPlain key={n} aria-label={n}><Glyph n={n} size={16} /></JPlain>)}</JRow></JGroup>
      <JGroup $ml={21}>Step sync<JRow $g={5}><JSq $dim aria-label="Previous"><Glyph n="left" /></JSq><JSq $dim aria-label="Less"><Glyph n="thinMinus" /></JSq><JSq $dim aria-label="Zero"><House size={14} strokeWidth={2} /></JSq><JSq $dim aria-label="More"><Glyph n="thinPlus" /></JSq></JRow></JGroup>
      <JGroup $ml={35}>Step edit mode<JRow><JSelect w={90} value="Add" label="Step edit mode" /></JRow></JGroup>
      <JGroup $ml={30}>Step size<JRow><JSelect w={70} value="1" label="Step size" /><JSelect w={90} value="Beats" label="Step unit" /></JRow></JGroup>
      <JGroup $ml={30}>Pattern size<JRow><JSelect w={90} value="16 Steps" label="Pattern size" /></JRow></JGroup>
      <JGroup $ml={20}><JRow>
        <JPlain aria-label="Help"><svg width="18" height="18" fill="none" stroke="#909090" strokeWidth="1.800"><circle cx="9" cy="9" r="7.500" /><path d="M6.500 7.200a2.500 2.300 0 1 1 3.500 2c-.8.400-1 .8-1 1.600M9 12.300v1.600" /></svg></JPlain>
        <JPlain aria-label="Video"><svg width="18" height="14"><rect width="18" height="14" rx="4" fill="#909090" /><path d="M6.500 3.500l6 3.500-6 3.500z" fill="#1c1a00" /></svg></JPlain>
      </JRow></JGroup>
    </JFoot>
  </JBody>
);

/* ---------- arrangement data ---------- */
const beat = i => Math.round(10 + i * 28.8);
const TimeRuler = () => (
  <Ruler $h={41}>
    <svg width="100%" height="39">
      <defs><linearGradient id="tl" x1="0" y1="0" x2="0" y2="1"><stop offset="0" stopColor="#1e4f44" /><stop offset="1" stopColor="#23342f" /></linearGradient></defs>
      <rect x="10" width="463" height="39" fill="url(#tl)" />
      {Array.from({ length: 44 }, (_, i) => <rect key={i} x={beat(i)} y="0" width="1" height={i % 4 ? 9 : 13} fill={i % 4 ? "#788480" : "#e0e0e0"} />)}
      <path d="M10 0h8l-8 8zM473 0h-8l8 8z" fill="#00e0ae" /><path d="M126 8l7 6-7 6z" fill="#0b8fe0" />
      <path d="M241 8h8l-8 8zM472 8h-8l8 8z" fill="#e81818" /><path d="M298 32h12l-6 7z" fill="#b8b8b8" />
      <g fill="#c8ccca" fontFamily="DejaVu Sans, sans-serif" fontSize="13" textAnchor="middle">{[1, 2, 3, 4, 5].map(n => <text key={n} x={beat(4 * n - 4) + 1} y="28">{n}</text>)}</g>
      <path d="M10 0v39" stroke="#1d7a60" />
    </svg>
  </Ruler>
);
const Beats = () => (
  <GridLines>{Array.from({ length: 44 }, (_, i) => <rect key={i} x={beat(i)} y="0" width="1" height="100%" fill={i % 4 ? "#343837" : "#454948"} />)}</GridLines>
);
const drumWave = (() => {
  const top = [], bot = [];
  for (let x = 0; x <= 229; x++) {
    const p = (x + 32) % 35;
    let a = p < 4 ? 23 : p < 21 ? 12 - Math.abs(p - 10) * .4 + 4 * Math.sin(x * 2.3) : 2 + Math.sin(x * 1.9);
    if (p > 26 && p < 29) a = 9;
    top.push(`${x} ${(23.5 - a * .95).toFixed(1)}`); bot.unshift(`${x} ${(23.5 + a).toFixed(1)}`);
  }
  return "M" + top.concat(bot).join("L") + "z";
})();

const Keys = ({ list }) => (
  <TrackKeys>{list.map((k, i) => {
    if (k === "") return <span key={i} />;
    const icon = { rec: <Knoblet />, dot: <Knoblet $c="#fff" $s={8} />, armed: <Knoblet />, S: "S", M: "M", box: <Glyph n="keysBox" size={14} />, lock: <LockOpen size={14} strokeWidth={2} />, snow: <Snowflake size={15} strokeWidth={2} />, lanes: <Glyph n="lanes" size={14} />, curve: <Glyph n="curve" />, curveOn: <Glyph n="curve" /> }[k];
    return <TrackKey key={i} aria-label={k} $bg={k === "armed" ? "#f0293b" : k === "curveOn" ? CLIP : k === "dot" ? "#161616" : undefined}>{icon}</TrackKey>;
  })}</TrackKeys>
);
const TrackItem = ({ name, color, icon, dark, h, sel, keys, meters, children }) => (
  <Track $h={h} $sel={sel}>
    <TrackColor $c={color}><Glyph n={icon} size={14} color={dark ? "#333" : "#ccc"} /></TrackColor>
    <TrackBody><TrackName>{name}</TrackName><Keys list={keys} />{children}</TrackBody>
    <Meters>{meters}</Meters>
  </Track>
);

const plugins = ["Signal Distribution Histogram", "Signal sifter", "Simple amplifier", "Simple delay line, cubic spline", "Simple delay line, linear", "Simple delay line, noninterp", "Simple Scope (3 channel)", "Simple Scope (4 channel)", "Simple Scope (Mono)", "Simple Scope (Stereo)", "Sine + cosine oscillator", "Single band parametric", "Sinus wavewrapper", "Smooth Decimator", "Soul Force", "Soul Force", "Spectacle", "Spectr", "State Variable Filter", "Stereo Balance Control", "Stereo DJ X-Fade", "Stereo Phase Scope", "Stereo Phase-Correlation", "Stereo Routing", "Stereo/Frequency Scope", "StereoSourceSeparation", "StereoSourceSeparation", "stereoswitchbox", "Stereoswitchbox2", "Surround Level 3"];
const pianoKeys = [["B", "", 3], ["B", "♭", 3, 1], ["A", "", 3], ["A", "♭", 3, 1], ["G", "", 3], ["F", "♯", 3, 1], ["F", "", 3], ["E", "", 3], ["E", "♭", 3, 1], ["D", "", 3], ["D", "♭", 3, 1], ["C", "", 3], ["B", "", 2]];
const T = ({ n, ...r }) => <IconButton aria-label={n} {...r}><Glyph n={n} size={16} /></IconButton>;

export default function App() {
  return (
    <Shell>
      <Global />
      <TopBar>
        <Logo>
          <svg width="24" height="24" viewBox="0 0 24 24"><defs><linearGradient id="lg" x1="0" y1="0" x2="0" y2="1"><stop offset="0" stopColor="#ff6a00" /><stop offset="1" stopColor="#e8255c" /></linearGradient></defs><rect width="24" height="24" rx="3" fill="url(#lg)" /><path d="M5 5h14v14H5z" fill="none" stroke="#fff" strokeWidth="2" /><path d="M8 9h8l-8 6h8" fill="none" stroke="#fff" strokeWidth="2.500" /></svg>
        </Logo>
        <MenuTab $on>Edit</MenuTab><MenuTab>Project</MenuTab><MenuTab>View</MenuTab><MenuTab>Help</MenuTab>
        <Spacer />
        <TopRight><span>prj 189</span><IconButton $w={20} aria-label="Terminal"><Glyph n="terminal" /></IconButton><IconButton $w={32} aria-label="Log"><Glyph n="lines" /></IconButton><IconButton $w={24} aria-label="Settings"><FaCog size={20} /></IconButton></TopRight>
      </TopBar>
      <Toolbar>
        <T n="undo" /><T n="redo" $dim /><Sep />
        <T n="cut" /><T n="copy" /><T n="paste" /><T n="dup" /><T n="trash" /><Sep />
        <T n="clear" /><T n="grid" /><IconButton aria-label="Loop selection"><Repeat size={16} /></IconButton><Sep />
        <Cluster><T n="pointer" /><IconButton aria-label="Edit"><Pencil size={16} strokeWidth={2} /></IconButton><T n="hand" /><T n="eraser" /><T n="line" /><IconButton aria-label="Audition"><Volume2 size={15} fill="currentColor" /></IconButton></Cluster>
        <Sep />
        <Cluster><T n="fit" $w={32} /><T n="stretch" $w={32} /><T n="split" $w={32} $dim /><T n="bars" $w={32} $dim /></Cluster>
        <Spacer />
        <MidiIn>MIDI in</MidiIn><MidiLamp />
        <Scope><svg width="46" height="12" fill="none" stroke="#00f01e" strokeWidth="2"><path d="M0 8c3 1 5-5 10-5s8 6 12 6 6-6 10-6 7 5 10 5 3-1 4-2" /></svg></Scope>
      </Toolbar>

      <Main>
        <Rail>
          <RailButton $on aria-label="Library"><Glyph n="library" size={22} /></RailButton>
          <RailButton aria-label="Plugins"><Glyph n="plug" size={20} /></RailButton>
          <RailButton aria-label="Visibility"><Eye size={22} /></RailButton>
          <RailButton aria-label="Clips"><Glyph n="cells" size={16} /></RailButton>
          <RailButton aria-label="Automation"><Glyph n="step" size={16} /></RailButton>
        </Rail>

        <Inspector>
          <InspectorColor />
          <Section>
            <SectionHead>Track Properties <Info size={15} /></SectionHead>
            <FieldTitle>Track Name</FieldTitle><FieldValue>Vex</FieldValue>
            <FieldTitle>Direct Out</FieldTitle>
            <OutButton><Glyph n="exit" size={13} />Master</OutButton>
            <FieldTitle>Instrument</FieldTitle>
            <InstrumentSlot $bg="#1b684e">Vex</InstrumentSlot>
          </Section>
          <Section>
            <SectionHead>Inputs <Palette size={16} /></SectionHead>
            <Pick label="MIDI inputs" options={["All MIDI Inputs"]} $mt={1} />
            <Pick label="Channels" options={["All Channels"]} $mt={2} />
          </Section>
          <Section><SectionHead>MIDI FX <Palette size={16} /></SectionHead></Section>
          <Section>
            <SectionHead>Inserts <Glyph n="insert" size={15} /></SectionHead>
            <Slot $bg="#1b684e">Dragonfly Plate Reverb</Slot><Slot>Slot #2</Slot><Slot $bg="#1de06b">B.Jumblr</Slot><Slot $bg="#1de06b">Spectacle</Slot><Slot>Slot #5</Slot><Slot>Slot #6</Slot>
            <Dash />
          </Section>
          <Section>
            <SectionHead>Sends <Glyph n="send" size={16} /></SectionHead>
            <Slot $bg="linear-gradient(90deg, #d81f70 70%, #6f2849 70%)">fx input</Slot>
            {[1, 2, 3, 4, 5].map(i => <Slot key={i}>Pre-fader send</Slot>)}
            <Dash />
          </Section>
          <Section>
            <SectionHead>Fader <Glyph n="fader" size={16} /></SectionHead>
            <Balance><span>L</span><span>R</span></Balance>
            <FaderRow><FaderTrack /><BigMeter $ml={10} $t={88} /><BigMeter $ml={6} $t={83} /><Peak>Peak:<small>-11db</small></Peak></FaderRow>
            <ChannelKeys><ChannelKey $bg="#f0293b" aria-label="Record"><Knoblet /></ChannelKey><ChannelKey>S</ChannelKey><ChannelKey>M</ChannelKey><ChannelKey>L</ChannelKey><ChannelKey $bg="#1c1c1c" aria-label="Input echo"><svg width="14" height="14" fill="none" stroke="#ddd" strokeWidth="2"><circle cx="7" cy="7" r="6" /><path d="M5 5h5M5 7h4M5 9h5" strokeWidth="1.200" /></svg></ChannelKey></ChannelKeys>
          </Section>
          <Section><SectionHead>Comment <Glyph n="comment" size={16} /></SectionHead></Section>
        </Inspector>

        <Center>
          <ArrangerBar>
            <IconButton $w={49} $bg="#333"><Glyph n="bars" /><SnapLabel>1/1</SnapLabel></IconButton><Sep $h={22} />
            <Cluster $h={28} $bg="#333"><T n="layers" /><T n="brackets" /></Cluster><Sep $h={22} />
            <IconButton $w={34} $bg={ORANGE} aria-label="Musical mode"><Glyph n="note" size={20} /></IconButton><Sep $h={22} />
            <Cluster $h={28} $bg="#333"><T n="stretchR" /><T n="shrink" /></Cluster><Sep $h={22} />
            <T n="merge" $w={34} $dim /><Spacer /><IconButton $w={24} aria-label="Event viewer"><Glyph n="table" size={22} /></IconButton>
          </ArrangerBar>
          <Arranger>
            <TrackList>
              <TrackFilter><FilterCount><Glyph n="page" size={12} color="#4444c0" />7/9</FilterCount><SearchBox><Search size={14} /><input aria-label="Search tracks" /></SearchBox></TrackFilter>
              <TrackItem name="Chords" color="#0249ff" icon="strings" h={47} keys={["M", "S", "rec"]} meters={<Meter $w={7} $p={10} $t={12} $hot />} />
              <TrackItem name="Markers" color="#a22baa" icon="flag" h={25} keys={[]} />
              <TrackItem name="Master" color="#f31010" icon="spark" h={49} keys={["M", "S", "dot", "", "curve"]} meters={<><Meter $p={3} $t={19} $pc="#d01818" /><Meter $p={3} $t={19} $pc="#d01818" /></>} />
              <TrackItem name="drumkv1" color={CLIP} icon="keys" dark h={49} keys={["box", "M", "S", "rec", "curve", "lanes", "snow", "lock"]} meters={<><IdleMeter /><IdleMeter /></>} />
              <TrackItem name="Vex" color={CLIP} icon="keys" dark h={97} sel keys={["box", "M", "S", "armed", "curveOn", "lanes", "snow", "lock"]} meters={<><AutoMeter $t={65} /><AutoMeter $t={62} /></>}>
                <AutoRow>
                  <Glyph n="curve" size={17} /><span>Fader Volume</span><AutoValue>1.38</AutoValue>
                  <AutoModes><OnMode>On</OnMode><button>Touch</button><button>Off</button></AutoModes>
                  <AutoSteps><Glyph n="minus" size={14} /><Glyph n="plus" size={14} /></AutoSteps>
                </AutoRow>
              </TrackItem>
              <TrackItem name="Drums_Full Kit 1_115bpm.wav" color="#1b684e" icon="wave" h={49} keys={["M", "S", "rec", "", "curve", "lanes", "lock"]} meters={<><Meter $p={9} $t={14} $hot /><Meter $p={9} $t={24} $hot /></>} />
              <TrackItem name="fx" color="#fccb1c" icon="spark" dark h={49} keys={["M", "S", "", "", "curve"]} meters={<><Meter $p={26} $t={34} /><Meter $p={26} $t={32} /></>} />
            </TrackList>
            <Timeline>
              <TimeRuler />
              <Lanes>
                <Beats />
                <Lane $h={48}>
                  <Clip $t={1} $w={463} $h={24} $c="#0249ff"><svg width="463" height="24"><path d="M86 0h12v24H86zM230 0h12v24h-12zM432 0h12v24h-12z" fill="#5380fd" /><path d="M345.500 0v24" stroke="#06277c" strokeWidth="2" strokeDasharray="5 5" /></svg><ClipLabel $bg="#2a3666">Chords</ClipLabel></Clip>
                  <Clip $t={30} $w={170} $h={17} $c="#0249ff"><ClipLabel>A Aeolian (Natural Minor)</ClipLabel></Clip>
                  <Playline $x={302} $t={1} />
                </Lane>
                <Lane $h={24} $dark><Clip $t={6} $w={42} $h={16} $c="#a22baa"><ClipLabel>start</ClipLabel></Clip><Playline $x={302} /></Lane>
                <Lane $h={49}><Playline $x={303} /></Lane>
                <Lane $h={49}><Playline $x={303} /></Lane>
                <Lane $h={97}>
                  <Clip $t={0} $w={460} $h={47} $c="#ffae31"><svg width="230" height="47"><path d="M26 0h75v7H26zM173 13h43v7h-43zM86 33h86v7H86z" fill="#fff" /></svg><ClipLabel $bg="#5d482f">Vex</ClipLabel></Clip>
                  <Clip $t={48} $w={460} $h={47} $c={CLIP}><svg width="230" height="47" fill="none"><path d="M0 16 40 12 216 4q2 5 13 5" stroke="#fff" strokeWidth="2" /></svg><ClipLabel $bg="#5d482f">Vex - Fader Volume</ClipLabel></Clip>
                </Lane>
                <Lane $h={49}><Clip $t={0} $w={460} $h={47} $c="#1b684e"><svg width="230" height="47"><path d={drumWave} fill="#fff" /></svg><ClipLabel $bg="rgba(50,58,55,.9)">Drums_Full Kit 1_115bpm.wav</ClipLabel></Clip></Lane>
                <Lane $h={39}><LaneScroll width="240" height="5"><rect x="3" width="101" height="6" rx="2" fill="#4c5352" /><path d="M106 3.500h134" stroke="#555" strokeDasharray="5 3" /></LaneScroll></Lane>
              </Lanes>
            </Timeline>
          </Arranger>
          <AddRow><IconButton $w={16} aria-label="Add track"><Glyph n="plus" size={14} /></IconButton><MiniView /></AddRow>
          <Divider />
          <EditorBar>
            <IconButton $w={51} $h={24} $bg="#333"><Glyph n="bars" /><SnapLabel>1/8</SnapLabel></IconButton>
            <PickTitle htmlFor="highlight">Highlight</PickTitle>
            <Pick id="highlight" options={["None"]} $w={74} $h={25} />
            <Cluster $h={24} $bg="#333"><T n="layers" $h={24} /><T n="brackets" $h={24} /></Cluster>
          </EditorBar>
          <Editor>
            <Strip />
            <EditorName>Vex</EditorName>
            <EditorKeys><IconButton $w={28} $h={30} $bg="#333" aria-label="Drum mode"><Glyph n="drum" /></IconButton><IconButton $w={34} $h={30} $bg={ORANGE} aria-label="Listen"><Glyph n="phones" size={18} /></IconButton></EditorKeys>
            <NoteArea>
              <svg width="560" height="32">
                <defs><linearGradient id="er" x1="0" y1="0" x2="0" y2="1"><stop offset="0" stopColor="#1e4f44" /><stop offset="1" stopColor="#23342f" /></linearGradient></defs>
                <rect width="560" height="32" fill="#262626" /><rect x="12" y="8" width="548" height="22" fill="url(#er)" /><rect x="12" y="1" width="548" height="7" fill={CLIP} /><rect x="82" y="1" width="12" height="7" fill="#ffae31" />
                <path d="M12 1h8l-8 8zM241 1h-8l8 8z" fill="#00e0ae" /><path d="M12 11l6 5-6 5z" fill="#2b8fe0" /><path d="M298 25h12l-6 7z" fill="#b8b8b8" /><path d="M126.500 8v9M241.500 8v9" stroke="#ccc" />
                <g fill="#c8ccca" fontFamily="DejaVu Sans, sans-serif" fontSize="13" textAnchor="middle"><text x="12" y="26">1</text><text x="126" y="26">2</text><text x="241" y="26">3</text></g>
              </svg>
            </NoteArea>
            <Piano>{pianoKeys.map(([n, a, o, b], i) => <PianoKey key={i} $black={b}><span>{n}{a}<sup>{o}</sup></span><i /></PianoKey>)}</Piano>
            <NoteArea>
              <svg width="560" height="275">{pianoKeys.map((k, i) => <g key={i}>{k[3] && <rect y={1 + i * 22} width="560" height="22" fill="#1f2322" />}<rect y={i * 22 + 1} width="560" height="1" fill="#606664" /></g>)}{Array.from({ length: 18 }, (_, i) => <rect key={i} x={11 + Math.round(i * 28.7)} width="1" height="275" fill={i % 4 ? "#353938" : "#464a49"} />)}<rect width="10" height="275" fill="#222" opacity=".5" /><rect x="12" width="2" height="275" fill="#1e3c33" /></svg>
              <Note $x={25} $y={67} $w={86}>A♭<sup>3</sup></Note><Note $x={183} $y={111} $w={44}>F♯<sup>3</sup></Note><Note $x={97} $y={177} $w={86}>E♭<sup>3</sup></Note>
              <Playline $x={73} /><HScroll />
            </NoteArea>
            <VelCell><Pick label="Controller" options={["Velocity"]} $w={109} $h={26} /></VelCell>
            <VelArea>
              <svg width="560" height="58">{Array.from({ length: 18 }, (_, i) => <rect key={i} x={11 + Math.round(i * 28.7)} width="1" height="58" fill="#3c403f" />)}</svg>
              <VelBar $x={25} $h={41} /><VelBar $x={97} $h={21} /><VelBar $x={183} $h={28} /><Playline $x={73} />
            </VelArea>
          </Editor>
          <BottomTabs>
            <BottomTab $on><Glyph n="roll" size={15} />Editor</BottomTab><BottomTab><Glyph n="mixer" size={14} />Mixer</BottomTab><BottomTab><Fx $s={16}>f<i>x</i></Fx>Modulators</BottomTab><BottomTab><Glyph n="chordpad" size={14} />Chord Pad</BottomTab>
          </BottomTabs>
        </Center>

        <Browser>
          <TabRow><BrowserTab aria-label="Favourites"><Star size={13} fill="currentColor" /></BrowserTab><BrowserTab $on aria-label="Plugins"><Glyph n="panel" size={14} /></BrowserTab><BrowserTab aria-label="Collections"><Glyph n="reel" size={15} /></BrowserTab></TabRow>
          <ShortList><ShortRow>Bandpass Filter</ShortRow><ShortRow>Chorus</ShortRow><ShortRow>Comb FilterPlugin</ShortRow><ShortRow>Compressor</ShortRow></ShortList>
          <TabRow $g={3}><BrowserTab aria-label="Instruments"><Glyph n="keys" size={13} /></BrowserTab><BrowserTab $on aria-label="Effects"><Glyph n="insert" size={14} /></BrowserTab><BrowserTab aria-label="Modulators"><Fx $s={14}>f<i>x</i></Fx></BrowserTab><BrowserTab aria-label="MIDI effects"><Palette size={15} /></BrowserTab></TabRow>
          <LongList>{plugins.map((p, i) => <li key={i}><PluginRow $on={i === 16}><Glyph n="insert" size={14} />{p}</PluginRow></li>)}</LongList>
          <PluginInfo>{"JPC\nAnalyser, LV2\nAudio: 2, 2\nMidi: 0, 0\nControls: 4, 0\nCV: 0, 0"}</PluginInfo>
        </Browser>
        <Rail>
          <RailButton $side="left" $on aria-label="Plugin browser"><Glyph n="lego" size={16} /></RailButton>
          <RailButton $side="left" aria-label="Files"><Disc size={20} /></RailButton>
          <RailButton $side="left" aria-label="Monitor"><Glyph n="phones" size={17} /></RailButton>
          <Spacer />
          <RailButton $side="left" aria-label="Now playing"><Disc size={26} /></RailButton>
        </Rail>
      </Main>

      <Footer>
        <Status>
          <p>Audio: <em>Dummy</em> | MIDI: <em>Dummy</em> | Status: <i>On</i></p>
          <p>Buf sz: <em>256 frames</em> | Rate: <em>44100 Hz</em> | <a href="#engine">Disable</a></p>
        </Status>
        <Lcd $w={90}>bpm<output>138 86</output></Lcd>
        <Lcd $w={69}>time sig.<output>4/4</output></Lcd>
        <TransportGroup><IconButton $w={26} $h={38} aria-label="Metronome"><Glyph n="metro" /></IconButton><IconButton $w={14} $h={38} aria-label="Metronome options"><Glyph n="caret" size={12} /></IconButton></TransportGroup>
        <TransportGroup $on><IconButton $w={28} $h={38} aria-label="Return to cue"><Anchor size={14} /></IconButton></TransportGroup>
        <TransportGroup><IconButton $w={28} $h={38} aria-label="Record"><Knoblet /></IconButton><IconButton $w={14} $h={38} aria-label="Record options"><Glyph n="caret" size={12} /></IconButton></TransportGroup>
        {["play", "stop", "rew", "ff"].map(n => <T key={n} n={n} $w={30} $h={38} />)}
        <TransportGroup $on><IconButton $w={25} $h={38} aria-label="Loop"><Repeat size={15} /></IconButton></TransportGroup>
        <Lcd $w={144}>playhead<output>0 04 4 13</output></Lcd>
        <Spacer />
        <CpuGrid>
          <svg width="12" height="12" fill="none" stroke="#94f500"><path d="M2.500 2.500h7v7h-7zM5 5h2v2H5zM4 0v2M6 0v2M8 0v2M4 10v2M6 10v2M8 10v2M0 4h2M0 6h2M0 8h2M10 4h2M10 6h2M10 8h2" /></svg>
          <CpuBars $n={2}>{Array.from({ length: 12 }, (_, i) => <i key={i} />)}</CpuBars>
          <svg width="12" height="10" fill="none" stroke="#94f500" strokeWidth="1.500"><path d="M0 5h2V1h3v7h3V4h2v2h2" /></svg>
          <CpuBars $n={3}>{Array.from({ length: 12 }, (_, i) => <i key={i} />)}</CpuBars>
        </CpuGrid>
      </Footer>

      <Window $x={671} $y={306} $w={1020} title=""><Jumblr /></Window>
      <Window $x={906} $y={6} $w={700} title="Spectacle (Vex #4)">
        <SpectrumBody>
          <Spectrum />
          <SpectrumTools>
            <SpectrumTool><FaCogs size={24} />Setup</SpectrumTool><SpectrumTool><FaArrowsAlt size={22} />Scale</SpectrumTool><SpectrumTool><FaHandPaper size={22} />Freeze</SpectrumTool><SpectrumTool><FaCrosshairs size={22} />Select</SpectrumTool><SpectrumTool><FaMagic size={22} />Hide</SpectrumTool>
          </SpectrumTools>
        </SpectrumBody>
      </Window>
    </Shell>
  );
}
